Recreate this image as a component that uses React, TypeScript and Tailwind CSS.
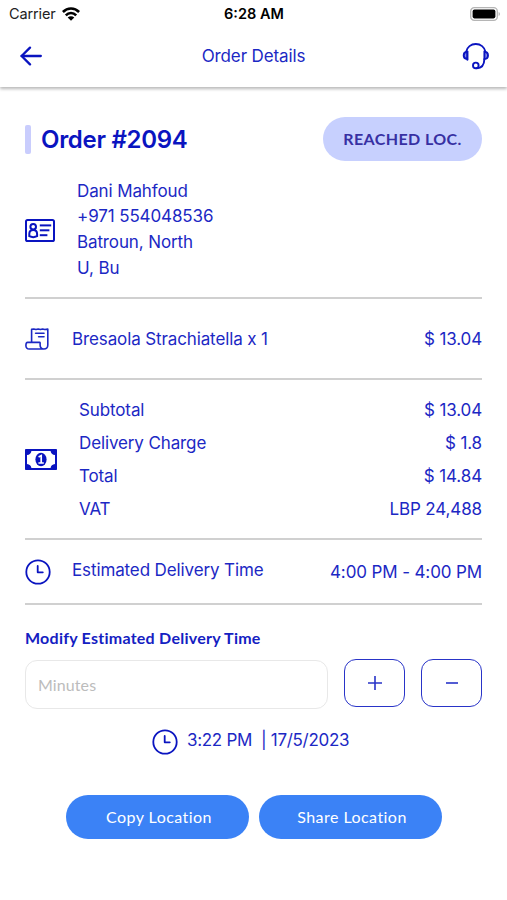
import React from 'react'

const customer = ['Dani Mahfoud', '+971 554048536', 'Batroun, North', 'U, Bu']

const charges = [
  { label: 'Subtotal', value: '$ 13.04' },
  { label: 'Delivery Charge', value: '$ 1.8' },
  { label: 'Total', value: '$ 14.84' },
  { label: 'VAT', value: 'LBP 24,488' },
]

function WifiIcon() {
  return (
    <svg width="18" height="14" viewBox="0 0 18 14" fill="none" stroke="#000" strokeWidth="2.6">
      <path d="M0.9 5C5.4 0.4 12.6 0.4 17.1 5" />
      <path d="M3.8 8.3C6.8 5.2 11.2 5.2 14.2 8.3" />
      <path d="M9 13.8L5.7 10.6C7.5 8.9 10.5 8.9 12.3 10.6L9 13.8Z" fill="#000" stroke="none" />
    </svg>
  )
}

function BatteryIcon() {
  return (
    <svg width="31" height="14" viewBox="0 0 31 14" fill="none">
      <rect x="0.7" y="0.7" width="26.6" height="12.6" rx="3.6" stroke="#b5b5b5" strokeWidth="1.3" />
      <rect x="2.6" y="2.6" width="22.8" height="8.8" rx="1.8" fill="#000" />
      <path d="M28.6 4.9C30.4 5.6 30.4 8.4 28.6 9.1Z" fill="#b5b5b5" />
    </svg>
  )
}

function BackIcon() {
  return (
    <svg
      width="22"
      height="20"
      viewBox="0 0 22 20"
      fill="none"
      stroke="#0a14c0"
      strokeWidth="2.3"
      strokeLinecap="round"
      strokeLinejoin="round"
    >
      <path d="M20.8 10H1.6" />
      <path d="M10 1.6L1.6 10L10 18.4" />
    </svg>
  )
}

function HeadsetIcon() {
  return (
    <svg
      width="28"
      height="28"
      viewBox="0 0 28 28"
      fill="none"
      stroke="#0a14c0"
      strokeWidth="1.9"
      strokeLinecap="round"
    >
      <path d="M4.2 9.6C5.2 5.2 8.9 2 13.8 2C18.7 2 22.4 5.2 23.4 9.6" />
      <path d="M5.4 9.6V17.8" />
      <path d="M5.2 9.8C3 10 1.7 11.4 1.7 13.4C1.7 15.4 3 16.8 5.2 17Z" fill="#7d86e6" />
      <path d="M22.4 9.8C24.8 10 26 11.4 26 13.4C26 15.4 24.8 16.8 22.4 17Z" fill="#7d86e6" />
      <path d="M22.4 17C22.2 22.6 19.8 26.3 14.8 26.3" />
      <circle cx="13.8" cy="23.4" r="2.8" />
    </svg>
  )
}

function IdCardIcon() {
  return (
    <svg width="30" height="23" viewBox="0 0 30 23" fill="none" stroke="#0a14c0" strokeWidth="2">
      <rect x="1" y="1" width="28" height="21" rx="1.6" />
      <circle cx="8.2" cy="7.7" r="2.8" />
      <path d="M4.3 17.2V15C4.3 12.4 6 11 8.2 11C10.4 11 12.1 12.4 12.1 15V17.2C9.6 18.4 6.8 18.4 4.3 17.2Z" />
      <path d="M14.8 6.4H26.2" />
      <path d="M14.8 11.3H24.4" />
      <path d="M14.8 16.2H22.4" />
    </svg>
  )
}

function ReceiptIcon() {
  return (
    <svg
      width="24"
      height="22"
      viewBox="0 0 24 22"
      fill="none"
      stroke="#1c28c4"
      strokeWidth="1.6"
      strokeLinecap="round"
      strokeLinejoin="round"
    >
      <path d="M6.6 13.8V1.4L8.8 1L11 1.5L13.2 1L15.4 1.5L17.6 1L19.8 1.5L22.8 1.1V17C22.8 19.4 21.2 21 18.8 21H4.2C2 21 0.9 19.6 0.9 17.4C0.9 15.6 1.4 14.4 2.6 14.4H14.7C15.2 14.4 15.2 15.2 15.1 16.6C15 19.4 16.4 21 18.8 21" />
      <path d="M10.6 5.2H19" />
      <path d="M13.6 8.8H19" />
    </svg>
  )
}

function MoneyIcon() {
  return (
    <svg width="32" height="21" viewBox="0 0 32 21" fill="none">
      <rect width="32" height="21" rx="0.8" fill="#0a14c0" />
      <path
        d="M6.4 2H25.6C25.8 4.4 27.4 5.9 30 6.1V14.9C27.4 15.1 25.8 16.6 25.6 19H6.4C6.2 16.6 4.6 15.1 2 14.9V6.1C4.6 5.9 6.2 4.4 6.4 2Z"
        fill="#fff"
      />
      <ellipse cx="16" cy="10.5" rx="5.6" ry="6.7" fill="#0a14c0" />
      <path d="M13.6 8L16.2 6.6V13.8M13.4 14H18.8" stroke="#fff" strokeWidth="1.7" />
    </svg>
  )
}

function ClockIcon() {
  return (
    <svg
      width="26"
      height="26"
      viewBox="0 0 26 26"
      fill="none"
      stroke="#0a14c0"
      strokeWidth="1.8"
      strokeLinecap="round"
      strokeLinejoin="round"
    >
      <circle cx="13" cy="13" r="11.7" />
      <path d="M12.7 7V13.3H17.8" />
    </svg>
  )
}

function Divider() {
  return <div className="h-0.5 bg-[#d0d0d0]" />
}

export default function App() {
  return (
    <div className="flex h-[900px] w-[507px] flex-col bg-white font-['Inter',sans-serif] text-[17px] leading-[26px] tracking-[-0.12px] text-[#1c28c4]">
      <header className="h-[87px] shadow-[0_2px_3px_rgba(0,0,0,0.28)]">
        <div className="grid h-[27px] grid-cols-3 items-center pr-[6px] pl-[9px] text-black">
          <div className="flex items-center gap-[6px] text-[14.5px] text-[#222]">
            Carrier
            <WifiIcon />
          </div>
          <div className="pr-[2px] text-center text-[14.5px] font-semibold tracking-normal">6:28 AM</div>
          <div className="flex justify-end">
            <BatteryIcon />
          </div>
        </div>
        <div className="flex h-[57px] items-center justify-between pr-[17px] pl-5">
          <BackIcon />
          <h1 className="pl-[3px]">Order Details</h1>
          <HeadsetIcon />
        </div>
      </header>

      <main className="flex flex-col px-[25px] pt-[30px]">
        <div className="flex h-11 items-center justify-between">
          <div className="flex items-center gap-[10px]">
            <span className="h-[29px] w-[6px] rounded-[2px] bg-[#c9cdfd]" />
            <h2 className="pt-[2px] text-2xl font-semibold tracking-[-0.3px] text-[#0a14c0]">Order #2094</h2>
          </div>
          <span className="flex h-11 w-[159px] items-center justify-center rounded-full bg-[#c7d0fe] font-['Lato',sans-serif] text-base font-bold tracking-[0.4px] text-[#3730a3]">
            REACHED LOC.
          </span>
        </div>

        <section className="flex h-[136px] items-center pt-[2px]">
          <IdCardIcon />
          <div className="pl-[22px] leading-[25.7px]">
            {customer.map((line) => (
              <p key={line}>{line}</p>
            ))}
          </div>
        </section>
        <Divider />

        <section className="flex h-[79px] items-center">
          <ReceiptIcon />
          <p className="pl-[23px]">Bresaola Strachiatella x 1</p>
          <p className="ml-auto">$ 13.04</p>
        </section>
        <Divider />

        <section className="flex h-[158px] items-center">
          <MoneyIcon />
          <div className="flex-1 pt-[2px] pl-[22px] leading-[33px]">
            {charges.map((row) => (
              <div key={row.label} className="flex justify-between">
                <span>{row.label}</span>
                <span>{row.value}</span>
              </div>
            ))}
          </div>
        </section>
        <Divider />

        <section className="flex h-[63px] items-center">
          <ClockIcon />
          <p className="pb-[3px] pl-[21px]">Estimated Delivery Time</p>
          <p className="ml-auto">4:00 PM - 4:00 PM</p>
        </section>
        <Divider />

        <h3 className="mt-[21px] font-['Lato',sans-serif] text-base font-bold tracking-[0.25px] text-[#1420c2]">
          Modify Estimated Delivery Time
        </h3>
        <div className="mt-[8px] flex gap-4">
          <input
            placeholder="Minutes"
            className="mt-[2px] h-[49px] w-[304px] rounded-xl border border-[#e8e8e8] px-3 font-['Lato',sans-serif] text-base tracking-[0.1px] placeholder:text-[#bcbcbc]"
          />
          <button className="mt-px flex h-12 w-[61px] items-center justify-center rounded-xl border-[1.5px] border-[#2934c8]">
            <svg width="14" height="14" viewBox="0 0 14 14" stroke="#2934c8" strokeWidth="1.6">
              <path d="M0 7H14M7 0V14" />
            </svg>
          </button>
          <button className="mt-px flex h-12 w-[61px] items-center justify-center rounded-xl border-[1.5px] border-[#2934c8]">
            <svg width="12" height="14" viewBox="0 0 12 14" stroke="#2934c8" strokeWidth="1.6">
              <path d="M0 7H12" />
            </svg>
          </button>
        </div>

        <div className="mt-[18px] flex items-center pl-[127px]">
          <ClockIcon />
          <p className="pb-[3px] pl-[9px] tracking-[-0.3px] whitespace-pre">3:22 PM  | 17/5/2023</p>
        </div>

        <div className="mt-[39px] flex justify-center gap-[10px] font-['Lato',sans-serif] text-base tracking-[0.45px] text-white">
          <button className="h-11 w-[183px] rounded-full bg-[#3b82f6] pl-1">Copy Location</button>
          <button className="h-11 w-[183px] rounded-full bg-[#3b82f6] pl-1">Share Location</button>
        </div>
      </main>
    </div>
  )
}
